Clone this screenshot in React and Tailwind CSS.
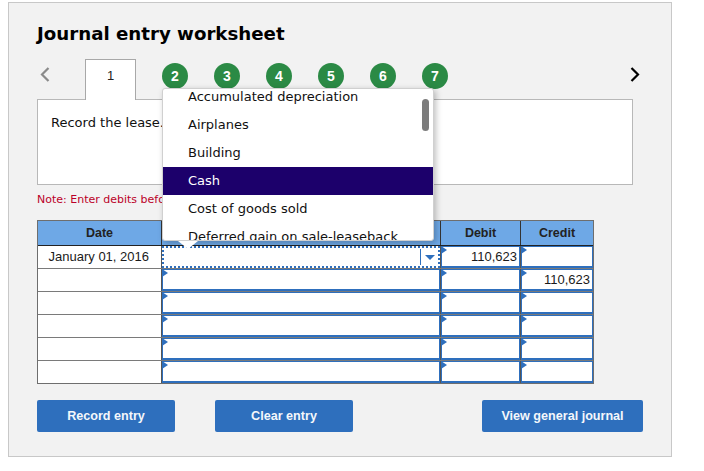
const Mark = () => (
  <svg className="absolute -left-px -top-px z-[1]" width="6" height="8" viewBox="0 0 6 8"><path d="M0 0 L6 4 L0 8 Z" fill="#2e6fbd" /></svg>
);

const Input = ({ value }) => (
  <div className="relative h-[22px] border border-b-2 border-[#2e6fbd] bg-white pr-[2px] text-right font-['Liberation_Sans',sans-serif] text-[13px] leading-[19px] text-[#1a1a1a]">
    <Mark />
    {value}
  </div>
);

const rows = [
  ['January 01, 2016', '110,623', ''],
  ['', '', '110,623'],
  ['', '', ''],
  ['', '', ''],
  ['', '', ''],
  ['', '', ''],
];

const Row = ({ row, i }) => (
  <div className="grid h-[23px] grid-cols-[123px_279px_80px_73px] grid-rows-[22px] border-b border-[#7a7a7a] last:h-[22px] last:border-b-0">
    <div className="bg-white pr-[12px] text-right font-['Liberation_Sans',sans-serif] text-[13px] leading-[22px] text-[#1a1a1a]">{row[0]}</div>
    <div className="border-l border-[#555] bg-white">
      {i === 0 ? (
        <div className="relative flex h-[22px] justify-end border-2 border-dotted border-[#2e6fbd] bg-white">
          <div className="my-px flex w-[18px] items-center justify-center border-l border-[#2e6fbd]">
            <svg width="10" height="5" viewBox="0 0 10 5"><path d="M0 0 H10 L5 5 Z" fill="#2e6fbd" /></svg>
          </div>
        </div>
      ) : (
        <div className="relative h-[22px] border border-b-2 border-[#2e6fbd] bg-white"><Mark /></div>
      )}
    </div>
    <div className="border-l border-[#555]"><Input value={row[1]} /></div>
    <div className="border-l border-[#555]"><Input value={row[2]} /></div>
  </div>
);

const Btn = ({ w, children }) => (
  <button className={`h-[32px] ${w} rounded-[2px] bg-[#2e6fbd] pt-px font-['Liberation_Sans',sans-serif] text-[12.6px] font-bold text-[#f4f7fb]`}>{children}</button>
);

const items = ['Airplanes', 'Building', 'Cash', 'Cost of goods sold', 'Deferred gain on sale-leaseback'];

export default function App() {
  return (
    <div className="h-[471px] w-[704px] bg-white pl-2 pt-[2px]">
      <div className="relative h-[455px] w-[664px] border border-[#c8c8c8] bg-[#f2f2f2] px-7 pt-[16px] font-['DejaVu_Sans',sans-serif]">
        <h1 className="h-[30px] text-[18.2px] font-bold leading-[30px] text-black">Journal entry worksheet</h1>

        <div className="relative z-[1] mt-[10px] -mb-px flex h-[41px]">
          <svg className="ml-[3px] mt-[8px]" width="10" height="15" viewBox="0 0 10 15" fill="none" stroke="#8a8a8a" strokeWidth="2.2"><path d="M8.5 1 L2 7.5 L8.5 14" /></svg>
          <div className="ml-[35px] flex h-[41px] w-[51px] justify-center border border-b-0 border-[#a8a8a8] bg-white pt-[6px] font-['Liberation_Sans',sans-serif] text-[13px] text-[#222]">1</div>
          <div className="ml-[26px] mt-1 flex gap-[26px]">
            {[2, 3, 4, 5, 6, 7].map((n) => (
              <div key={n} className="flex h-[26px] w-[26px] items-center justify-center rounded-full bg-[#2b8a45] font-['Liberation_Sans',sans-serif] text-[14px] font-bold text-white">{n}</div>
            ))}
          </div>
          <svg className="ml-[182px] mt-[8px]" width="10" height="15" viewBox="0 0 10 15" fill="none" stroke="#000" strokeWidth="2.2"><path d="M1.5 1 L8 7.5 L1.5 14" /></svg>
        </div>

        <div className="h-[86px] w-[596px] border border-[#b8b8b8] bg-white px-[13px] pt-[14px] text-[13px] leading-[18px] text-[#111]">Record the lease.</div>

        <p className="mt-[8px] h-[27px] text-[11px] leading-[14px] text-[#bb0028]">Note: Enter debits before credits.</p>

        <div className="w-[557px] border border-[#6e6e6e] bg-white">
          <div className="grid h-[25px] grid-cols-[123px_279px_80px_73px] border-b border-[#222] bg-[#6ea8e6] text-center font-['Liberation_Sans',sans-serif] text-[12.5px] font-bold leading-[24px] text-[#222]">
            <div>Date</div>
            <div className="border-l border-[#333]"></div>
            <div className="border-l border-[#333]">Debit</div>
            <div className="border-l border-[#333]">Credit</div>
          </div>
          {rows.map((r, i) => <Row key={i} row={r} i={i} />)}
        </div>

        <div className="mt-[16px] flex">
          <Btn w="w-[138px]">Record entry</Btn>
          <Btn w="ml-[40px] w-[138px]">Clear entry</Btn>
          <Btn w="ml-[129px] w-[161px]">View general journal</Btn>
        </div>

        <div className="absolute left-[153px] top-[85px] z-10 h-[153px] w-[272px] overflow-hidden rounded-[3px] border border-[#d0d0d0] bg-white text-[13px] leading-[28px] text-[#111] shadow-[2px_2px_6px_rgba(0,0,0,0.25)]">
          <div className="-mt-[6px] h-[28px] pl-[25px]">Accumulated depreciation</div>
          {items.map((t) => (
            <div key={t} className={t === 'Cash' ? "h-[28px] bg-[#1c006b] pl-[25px] text-white" : "h-[28px] pl-[25px]"}>{t}</div>
          ))}
          <div className="absolute right-[4px] top-[10px] h-[32px] w-[7px] rounded-full bg-[#7c7c7c]" />
        </div>
        <svg className="absolute left-[169px] top-[238px] z-10" width="20" height="8" viewBox="0 0 20 8"><path d="M0 0 H20 L10 8 Z" fill="#fff" /></svg>
      </div>
    </div>
  );
}
